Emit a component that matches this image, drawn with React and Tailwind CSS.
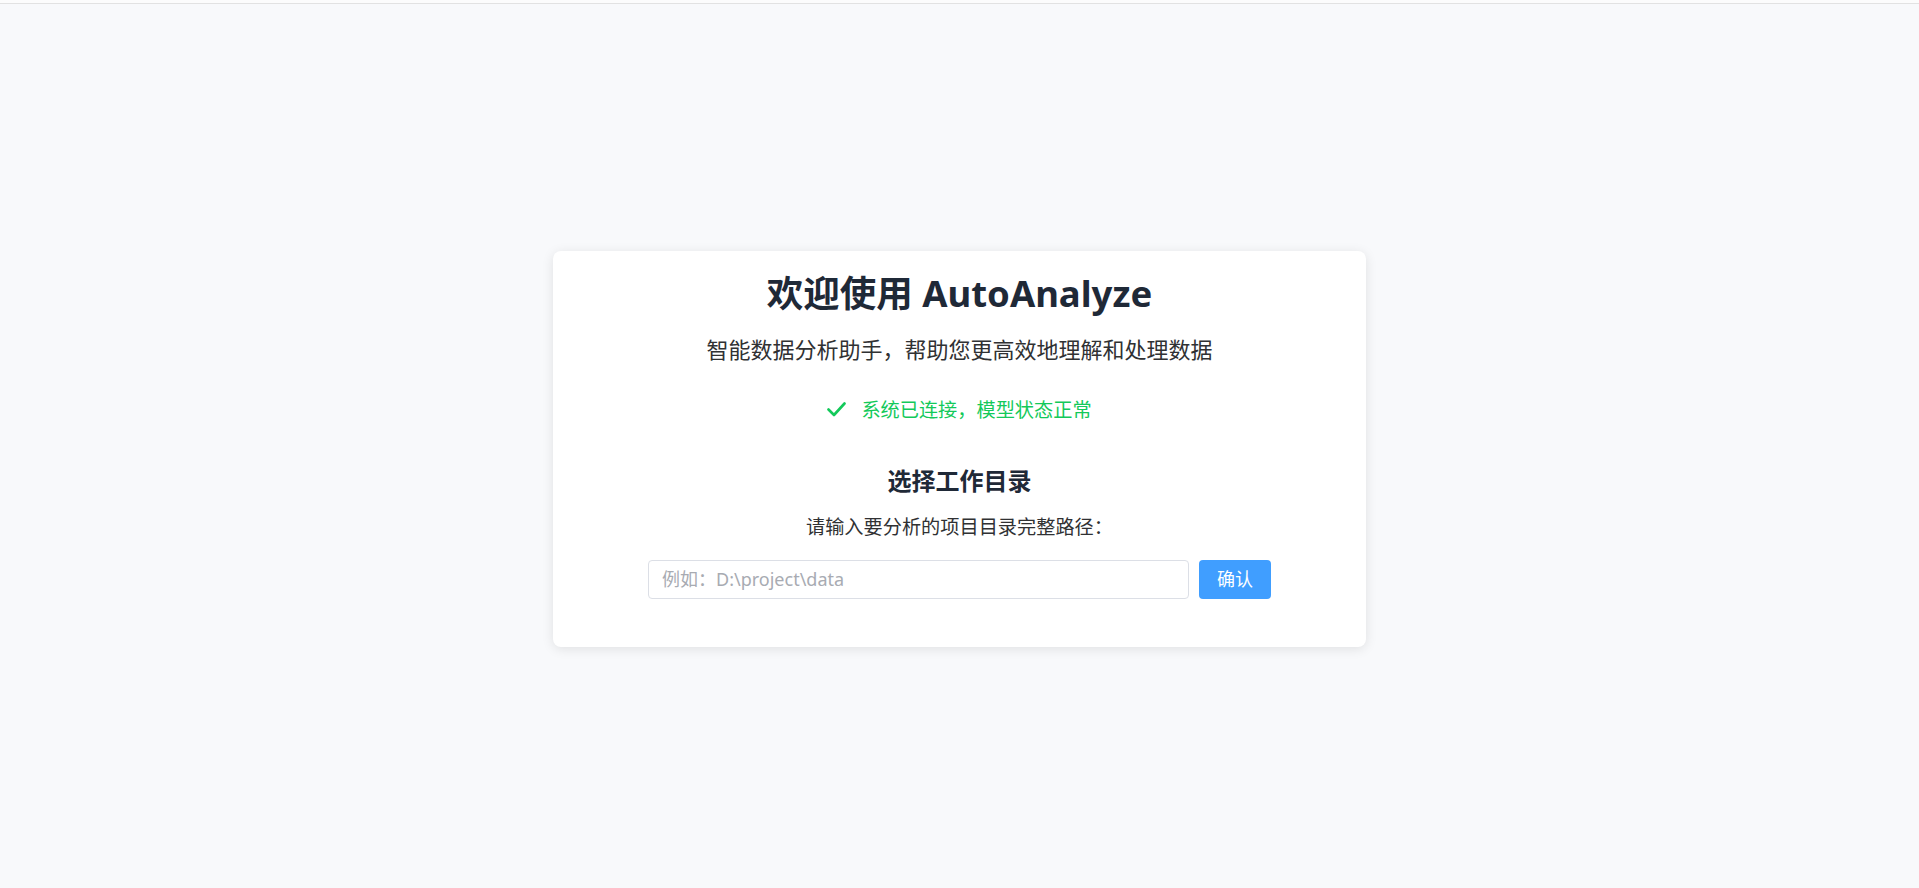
export default function App() {
  return (
    <div
      className="min-h-screen flex flex-col bg-[#f8f9fb]"
      style={{ fontFamily: '"Noto Sans", "Noto Sans CJK SC", sans-serif' }}
    >
      <div className="h-[4px] bg-[#fcfcfc] border-b border-[#e2e2e2]" />
      <main className="flex-1 flex items-center justify-center pt-[5px]">
        <div className="w-[813px] bg-white rounded-lg shadow-[0_2px_12px_rgba(0,0,0,0.1)] pt-5 pb-12 flex flex-col items-center">
          <h1 className="text-[36.5px] leading-[44px] font-bold text-[#1f2937]">
            欢迎使用 AutoAnalyze
          </h1>
          <p className="mt-[19px] text-[22px] leading-[30px] text-[#303133]">
            智能数据分析助手，帮助您更高效地理解和处理数据
          </p>
          <div className="mt-[32px] h-[28px] flex items-center gap-[15px] text-[19.2px] text-[#13c95a]">
            <svg width="19" height="15" viewBox="0 0 19 15" fill="none">
              <polyline
                points="1.5,7.5 7,13 17.5,1.5"
                stroke="#13c95a"
                strokeWidth="2.6"
                strokeLinecap="round"
                strokeLinejoin="round"
              />
            </svg>
            <span className="leading-[28px]">系统已连接，模型状态正常</span>
          </div>
          <h2 className="mt-[41px] text-[24px] leading-[32px] font-bold text-[#1f2937]">
            选择工作目录
          </h2>
          <p className="mt-[16px] text-[19.2px] leading-[28px] text-[#303133]">
            请输入要分析的项目目录完整路径：
          </p>
          <div className="mt-[19px] flex items-center gap-[10px]">
            <input
              type="text"
              placeholder="例如：D:\project\data"
              className="w-[541px] h-[39px] px-[13px] rounded-[4px] border border-[#dcdfe6] bg-white text-[18px] text-[#303133] placeholder:text-[#a8abb2] outline-none"
            />
            <button className="w-[72px] h-[39px] rounded-[4px] bg-[#409eff] text-white text-[18px]">
              确认
            </button>
          </div>
        </div>
      </main>
    </div>
  );
}
